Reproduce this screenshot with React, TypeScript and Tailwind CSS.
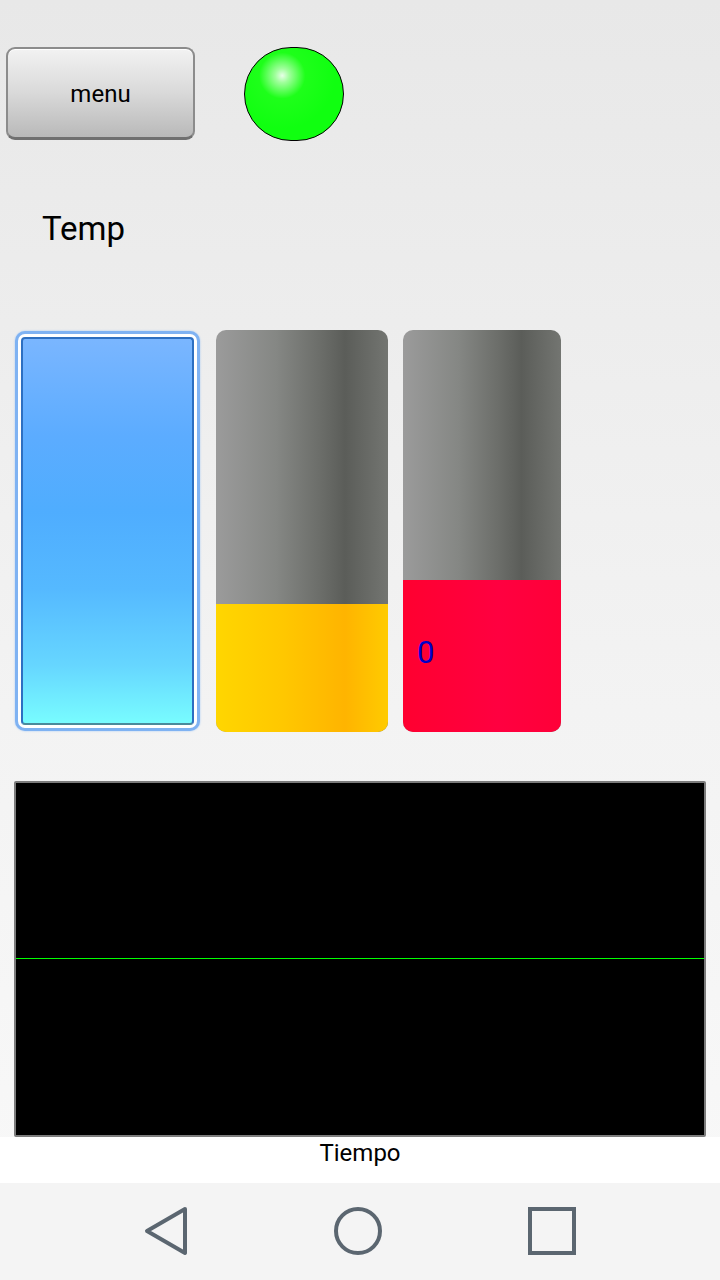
import React from 'react';

const Gauge = ({ fillTop, fill, children }: { fillTop: number; fill: string; children?: React.ReactNode }) => (
  <div className="relative h-full w-full rounded-[10px] overflow-hidden flex flex-col bg-[linear-gradient(90deg,#9b9b9b_0%,#858784_35%,#6c6e6a_60%,#5b5d59_75%,#737571_100%)]">
    <div style={{ height: fillTop }} className="shrink-0" />
    <div className={`flex-1 relative ${fill}`}>{children}</div>
  </div>
);

const App: React.FC = () => {
  return (
    <div className="w-[720px] h-[1280px] flex flex-col font-['Roboto',sans-serif] overflow-hidden">
      <div className="flex-1 flex flex-col bg-[linear-gradient(180deg,#e8e8e8_0%,#f3f3f3_60%,#f8f8f8_100%)]">
        {/* top row */}
        <div className="flex items-center pt-[47px] pl-[6px] h-[140px]">
          <button className="w-[189px] h-[93px] rounded-[9px] border-2 border-[#8c8c8c] border-b-[3px] border-b-[#707070] shadow-[inset_0_1px_0_#fff] bg-[linear-gradient(180deg,#f2f2f2_0%,#d9d9d9_50%,#b9b9b9_100%)] text-[24px] text-black flex items-center justify-center pt-[2px]">
            menu
          </button>
          <div className="ml-[49px] w-[100px] h-[94px] rounded-full border border-black bg-[radial-gradient(circle_at_38%_30%,#e8ffe8_0%,#a0ff9c_8%,#1eff1a_26%,#10ff10_60%)]" />
        </div>

        <div className="pl-[42px] mt-[69px] h-[40px] text-[33px] leading-[40px] text-black">Temp</div>

        {/* gauges */}
        <div className="flex mt-[82px] h-[402px] pl-[15px]">
          <div className="w-[185px] h-[400px] rounded-[10px] border-[3px] border-[#7fb2f2] bg-white p-[3px] shadow-[0_0_2px_#9cc4f5]">
            <div className="h-full w-full rounded-[4px] border-2 border-[#2d6fc1] border-b-[#4a8a9c] bg-[linear-gradient(180deg,#7ab6ff_0%,#5cacff_25%,#4fadfe_45%,#55b9ff_65%,#66d6ff_85%,#78fcff_100%)]" />
          </div>
          <div className="ml-[16px] w-[172px] h-[402px] -mt-[1px]">
            <Gauge fillTop={274} fill="bg-[linear-gradient(90deg,#ffd600_0%,#ffc700_40%,#ffb400_75%,#ffcb00_100%)]" />
          </div>
          <div className="ml-[15px] w-[158px] h-[402px] -mt-[1px]">
            <Gauge fillTop={250} fill="bg-[linear-gradient(90deg,#ff0030_0%,#ff0040_60%,#ff0038_100%)]">
              <div className="absolute left-[14px] top-[55px] text-[31px] leading-[36px] text-[#0000c8]">0</div>
            </Gauge>
          </div>
        </div>

        {/* chart */}
        <div className="mt-[48px] mx-[14px] h-[356px] rounded-[2px] border-2 border-[#7c7c7c] bg-black flex flex-col">
          <div className="h-[175px]" />
          <div className="h-px bg-[#00ff00]" />
        </div>
        <div className="flex-1 bg-white flex justify-center pt-[1px] text-[24px] leading-[30px] text-black">Tiempo</div>
      </div>

      {/* nav bar */}
      <div className="h-[97px] bg-[#f4f4f4] flex items-center justify-center gap-[144px] pb-[2px]">
        <svg width="46" height="50" viewBox="0 0 46 50">
          <path d="M42 3 L4 25 L42 47 Z" fill="none" stroke="#5b6670" strokeWidth="4" strokeLinejoin="round" />
        </svg>
        <svg width="50" height="50" viewBox="0 0 50 50">
          <circle cx="25" cy="25" r="22" fill="none" stroke="#5b6670" strokeWidth="4" />
        </svg>
        <svg width="50" height="50" viewBox="0 0 50 50">
          <rect x="3" y="3" width="44" height="44" fill="none" stroke="#5b6670" strokeWidth="4" />
        </svg>
      </div>
    </div>
  );
};

export default App;
